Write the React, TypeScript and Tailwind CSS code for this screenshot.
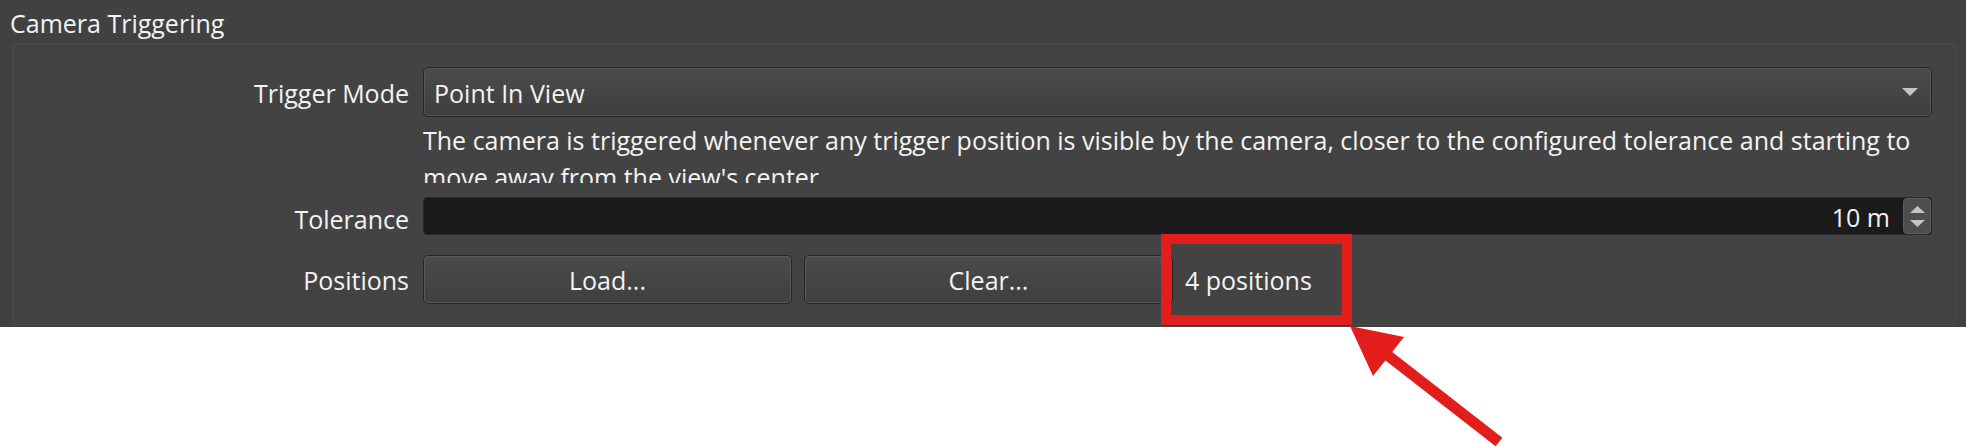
import React from "react";

const font = { fontFamily: '"Open Sans", "Noto Sans", sans-serif' };

const Label = ({ children }: { children: React.ReactNode }) => (
  <div className="flex items-center justify-end pt-[4px] text-[25px] text-[#f3f3f3] whitespace-nowrap">
    {children}
  </div>
);

const QtButton = ({ children }: { children: React.ReactNode }) => (
  <button className="h-[49px] w-[369px] pt-[3px] rounded-[5px] border border-[#262626] bg-gradient-to-b from-[#4b4b4b] to-[#3f3f3f] shadow-[inset_0_0_0_1px_#5a5a5a] text-[25px] text-[#f3f3f3]">
    {children}
  </button>
);

const App = () => {
  return (
    <div className="relative w-[1966px] h-[447px] bg-white overflow-hidden" style={font}>
      <div className="h-[327px] bg-[#414141] pt-[8px]">
        <div className="pl-[10px] text-[25px] leading-[30px] text-[#f3f3f3] h-[35px]">
          Camera Triggering
        </div>

        <div className="ml-[12px] mr-[9px] h-[282px] border border-[#4c4c4c] bg-[#434343] rounded-[3px] pt-[23px] pr-[24px]">
          <div className="grid grid-cols-[396px_1fr] gap-x-[14px]">
            {/* Trigger mode */}
            <Label>Trigger Mode</Label>
            <div className="h-[50px] rounded-[5px] border border-[#262626] bg-gradient-to-b from-[#4b4b4b] to-[#3f3f3f] shadow-[inset_0_0_0_1px_#565656] flex items-center justify-between pl-[10px] pr-[13px] text-[25px] text-[#f3f3f3]">
              <span className="pt-[4px]">Point In View</span>
              <svg width="16" height="8" viewBox="0 0 16 8">
                <polygon points="0,0 16,0 8,8" fill="#c4c4c4" />
              </svg>
            </div>

            <div />
            <div className="mt-[5px] h-[61px] overflow-hidden text-[25px] leading-[37px] text-[#f3f3f3]">
              The camera is triggered whenever any trigger position is visible by the camera, closer to the configured tolerance and starting to move away from the view's center
            </div>

            {/* Tolerance */}
            <div className="mt-[14px] flex justify-end">
              <Label>Tolerance</Label>
            </div>
            <div className="mt-[14px] h-[38px] rounded-[4px] border border-[#2a2a2a] bg-[#1b1b1b] flex items-center justify-end text-[25px] text-[#f3f3f3]">
              <span className="mr-[13px] pt-[3px]">10 m</span>
              <div className="h-[36px] w-[28px] rounded-[4px] border border-[#5c5c5c] bg-[#4e4e4e] flex flex-col items-center justify-center gap-[7px]">
                <svg width="15" height="7" viewBox="0 0 15 7">
                  <polygon points="7.5,0 15,7 0,7" fill="#c4c4c4" />
                </svg>
                <svg width="15" height="7" viewBox="0 0 15 7">
                  <polygon points="0,0 15,0 7.5,7" fill="#c4c4c4" />
                </svg>
              </div>
            </div>

            {/* Positions */}
            <div className="mt-[16px] flex justify-end">
              <Label>Positions</Label>
            </div>
            <div className="mt-[16px] flex items-center gap-[12px]">
              <QtButton>Load...</QtButton>
              <QtButton>Clear...</QtButton>
              <span className="pt-[4px] text-[25px] text-[#f3f3f3]">4 positions</span>
            </div>
          </div>
        </div>
      </div>

      {/* annotation */}
      <div className="absolute left-[1161px] top-[234px] w-[191px] h-[91px] border-[10px] border-[#e31c1c]" />
      <svg className="absolute left-0 top-0 pointer-events-none" width="1966" height="447" viewBox="0 0 1966 447">
        <polygon points="1350,326 1404,337 1373,376" fill="#e31c1c" />
        <line x1="1386" y1="354" x2="1499" y2="442" stroke="#e31c1c" strokeWidth="11" />
      </svg>
    </div>
  );
};

export default App;
